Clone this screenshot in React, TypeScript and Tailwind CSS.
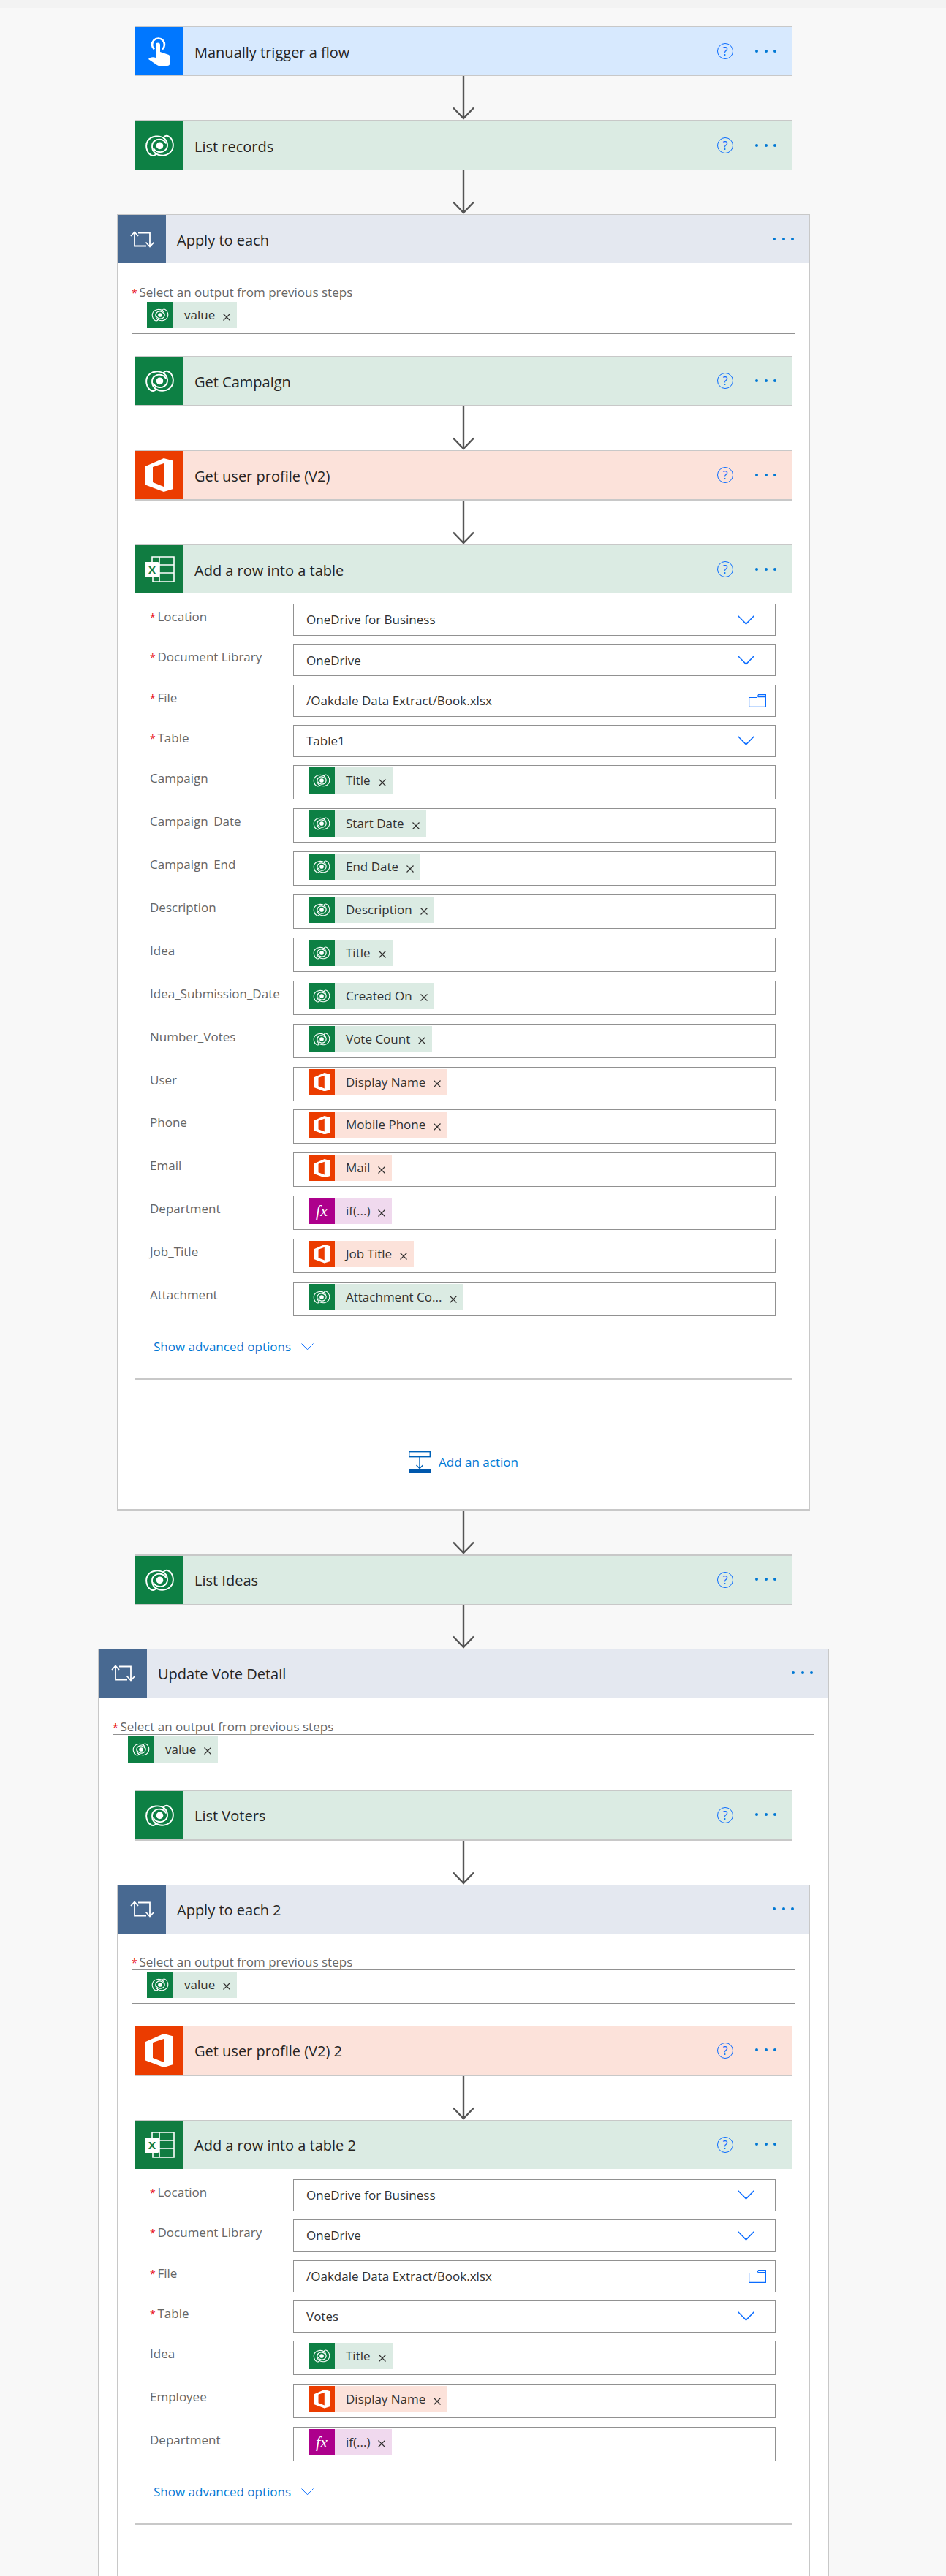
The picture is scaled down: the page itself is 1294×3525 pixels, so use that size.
import React from 'react';

const font = "font-['Open_Sans','Noto_Sans',sans-serif]";

type Kind = 'data' | 'office' | 'fx';

const chipBg: Record<Kind, string> = {
  data: 'bg-[#dbebe3]',
  office: 'bg-[#fce2da]',
  fx: 'bg-[#f0d9ee]',
};
const chipIcon: Record<Kind, string> = {
  data: 'bg-[#0d8044]',
  office: 'bg-[#eb3c00]',
  fx: 'bg-[#ad008c]',
};

const DataverseIcon = ({ size }: { size: number }) => (
  <svg width={size} height={size * 0.75} viewBox="-1 -1 42 32" fill="none" stroke="white" strokeWidth="2">
    <path d="M27 5C20-.5 8 .5 3 8C-1 14 1 24 7 28C10 30 13 29 15 27" />
    <path d="M13 25C20 31 32 30 37 22C41 16 39 5 33 2C30 0 27 1 25 3.5" />
    <path d="M15 27C8 22 7 12 13 8C18 4 27 6 29 12" />
    <path d="M25 3.5C32 8 33 18 27 22C22 26 13 24 11 18" />
    <circle cx="20" cy="15" r="5" fill="white" stroke="none" />
  </svg>
);

const OfficeIcon = ({ width }: { width: number }) => (
  <svg width={width} height={(width * 46) / 38} viewBox="0 0 38 46" fill="white">
    <path fillRule="evenodd" d="M0 11L25 0L38 3.5V42L25 46L0 36.5ZM25 7L10 12V33L25 39Z" />
  </svg>
);

const ExcelIcon = () => (
  <svg width="41" height="36" viewBox="0 0 41 36" fill="none" stroke="white" strokeWidth="1.6">
    <path d="M10 8V1H40V35H11V29M20 1V35M20 12H40M20 23H40" />
    <rect x="0" y="8" width="19" height="21" rx="1" fill="white" stroke="none" />
    <text x="5" y="24" fill="#107c41" stroke="none" fontSize="15" fontWeight="700" fontFamily="'Open Sans', sans-serif">
      X
    </text>
  </svg>
);

const HandIcon = () => (
  <svg width="30" height="40" viewBox="0 0 30 40" fill="white">
    <path d="M8 17.5a8.5 8.5 0 1 1 11 0" fill="none" stroke="white" strokeWidth="2.6" />
    <path d="M10 11.5a3 3 0 0 1 6 0V21l10.5 3.5c2 .7 3 1.8 3 3.5v8.5c0 2-1.5 3.5-3.5 3.5H15c-1.5 0-3-.6-4-1.5L0 31c1.5-2.5 6-3.5 10-2z" />
  </svg>
);

const RepeatIcon = () => (
  <svg width="33" height="23" viewBox="0 0 33 23" fill="none" stroke="white" strokeWidth="1.8">
    <path d="M6 2.5V20.5H22M1 7L6 1.5L11 7M11 2.5H27V20.5M21.5 15.5L27 21.5L32.5 15.5" />
  </svg>
);

const Chevron = ({ width = 23, stroke = 1.5 }: { width?: number; stroke?: number }) => (
  <svg width={width} height={(width * 13) / 23} viewBox="0 0 23 13" fill="none" stroke="#0a6cff" strokeWidth={(stroke * 23) / width}>
    <path d="M.7.7L11.5 11.8L22.3.7" />
  </svg>
);

const FolderIcon = () => (
  <svg width="24" height="18" viewBox="0 0 24 18" fill="none" stroke="#0a6cff" strokeWidth="1.2">
    <path d="M.6 4.5H11.5L13.5.6H23.4V17.4H.6ZM13 3.6H23.4" />
  </svg>
);

const Arrow = () => (
  <div className="flex h-[60px] justify-center">
    <svg width="30" height="60" viewBox="0 0 30 60" fill="none" stroke="#555555" strokeWidth="2.4">
      <path d="M15 0V58M1 43.5L15 58L29 43.5" />
    </svg>
  </div>
);

const Dots = () => (
  <div className="flex gap-[8.5px]">
    <span className="h-[4px] w-[4px] rounded-full bg-[#0078d4]" />
    <span className="h-[4px] w-[4px] rounded-full bg-[#0078d4]" />
    <span className="h-[4px] w-[4px] rounded-full bg-[#0078d4]" />
  </div>
);

const Help = () => (
  <span className="flex h-[22px] w-[22px] items-center justify-center rounded-full border border-[#0a6cff] text-[16px] leading-none text-[#0a6cff]">
    ?
  </span>
);

const Header = ({
  title,
  icon,
  iconBg,
  headBg,
  help = true,
}: {
  title: string;
  icon: React.ReactNode;
  iconBg: string;
  headBg: string;
  help?: boolean;
}) => (
  <div className={`flex h-[66px] items-center ${headBg}`}>
    <div className={`flex h-[66px] w-[66px] shrink-0 items-center justify-center ${iconBg}`}>{icon}</div>
    <div className="ml-[15px] flex-1 pt-[3px] text-[20px] leading-[26px] text-[#252423]">{title}</div>
    {help && <Help />}
    {help && <div className="w-[30px]" />}
    <div className="mr-[21px] mb-[1px]">
      <Dots />
    </div>
  </div>
);

const Step = ({
  title,
  kind,
  heavyTop = false,
}: {
  title: string;
  kind: 'trigger' | 'data' | 'office';
  heavyTop?: boolean;
}) => (
  <div
    className={`w-[900px] border-x border-[#c8c8c8] ${heavyTop ? 'border-t-2 border-b' : 'border-t border-b-2'}`}
  >
    {kind === 'trigger' && <Header title={title} icon={<HandIcon />} iconBg="bg-[#0077ff]" headBg="bg-[#d7e9fe]" />}
    {kind === 'data' && <Header title={title} icon={<DataverseIcon size={41} />} iconBg="bg-[#0d8044]" headBg="bg-[#dbebe3]" />}
    {kind === 'office' && <Header title={title} icon={<OfficeIcon width={38} />} iconBg="bg-[#eb3c00]" headBg="bg-[#fce2da]" />}
  </div>
);

const Chip = ({ kind, text }: { kind: Kind; text: string }) => (
  <div className={`flex h-[36px] items-center ${chipBg[kind]}`}>
    <div className={`flex h-[36px] w-[36px] items-center justify-center ${chipIcon[kind]}`}>
      {kind === 'data' && <DataverseIcon size={24} />}
      {kind === 'office' && <OfficeIcon width={21} />}
      {kind === 'fx' && <span className="font-['Liberation_Serif',serif] text-[22px] leading-none text-white italic">fx</span>}
    </div>
    <span className="ml-[15px] text-[17px] leading-[20px] text-[#323130]">{text}</span>
    <svg className="mt-[5px] mr-[9px] ml-[11px]" width="10" height="10" viewBox="0 0 10 10" stroke="#323130" strokeWidth="1.2">
      <path d="M.5.5L9.5 9.5M9.5.5L.5 9.5" />
    </svg>
  </div>
);

const Required = () => <span className="inline-block w-[10.5px] text-[14px] text-[#e81123]">*</span>;

type Row =
  | { label: string; value: string; end: 'chevron' | 'folder' }
  | { label: string; chip: string; kind: Kind };

const SelectRow = ({ row }: { row: Extract<Row, { value: string }> }) => (
  <div className="flex h-[55.33px] items-start">
    <div className="w-[196px] pt-[7px] text-[17px] leading-[22px] text-[#666666]">
      <Required />
      {row.label}
    </div>
    <div className="flex h-[44px] flex-1 items-center border border-[#919191] bg-white pr-[12px] pl-[17px]">
      <span className="flex-1 text-[17px] text-[#323130]">{row.value}</span>
      {row.end === 'chevron' ? (
        <span className="mr-[16px]">
          <Chevron />
        </span>
      ) : (
        <FolderIcon />
      )}
    </div>
  </div>
);

const TokenRow = ({ row }: { row: Extract<Row, { chip: string }> }) => (
  <div className="flex h-[58.9px] items-start">
    <div className="w-[196px] pt-[7px] text-[17px] leading-[22px] text-[#666666]">{row.label}</div>
    <div className="flex h-[47px] flex-1 border border-[#919191] bg-white pt-[2px] pl-[20px]">
      <Chip kind={row.kind} text={row.chip} />
    </div>
  </div>
);

const AddRow = ({ title, rows }: { title: string; rows: Row[] }) => (
  <div className="w-[900px] border-x border-t border-b-2 border-[#c8c8c8] bg-white">
    <Header title={title} icon={<ExcelIcon />} iconBg="bg-[#107c41]" headBg="bg-[#dbebe3]" />
    <div className="pt-[14px] pr-[22px] pl-[20px]">
      {rows.map(row =>
        'chip' in row ? <TokenRow key={row.label} row={row} /> : <SelectRow key={row.label} row={row} />,
      )}
    </div>
    <div className="flex h-[73px] items-center gap-[14px] pb-[13px] pl-[25px] text-[17px] text-[#0078d4]">
      Show advanced options
      <Chevron width={17} stroke={1} />
    </div>
  </div>
);

const Loop = ({
  title,
  width,
  pt,
  children,
  after,
}: {
  title: string;
  width: string;
  pt: string;
  children: React.ReactNode;
  after?: React.ReactNode;
}) => (
  <div className={`${width} border border-b-2 border-[#c8c8c8] bg-white`}>
    <Header title={title} icon={<RepeatIcon />} iconBg="bg-[#486991]" headBg="bg-[#e4e8f0]" help={false} />
    <div className={`px-[19px] ${pt}`}>
      <div className="h-[20px] text-[17px] leading-[20px] text-[#666666]">
        <Required />
        Select an output from previous steps
      </div>
      <div className="flex h-[47px] border border-[#919191] pt-[2px] pl-[20px]">
        <Chip kind="data" text="value" />
      </div>
    </div>
    <div className="flex flex-col items-center pt-[30px]">{children}</div>
    {after}
  </div>
);

const mainRows: Row[] = [
  { label: 'Location', value: 'OneDrive for Business', end: 'chevron' },
  { label: 'Document Library', value: 'OneDrive', end: 'chevron' },
  { label: 'File', value: '/Oakdale Data Extract/Book.xlsx', end: 'folder' },
  { label: 'Table', value: 'Table1', end: 'chevron' },
  { label: 'Campaign', chip: 'Title', kind: 'data' },
  { label: 'Campaign_Date', chip: 'Start Date', kind: 'data' },
  { label: 'Campaign_End', chip: 'End Date', kind: 'data' },
  { label: 'Description', chip: 'Description', kind: 'data' },
  { label: 'Idea', chip: 'Title', kind: 'data' },
  { label: 'Idea_Submission_Date', chip: 'Created On', kind: 'data' },
  { label: 'Number_Votes', chip: 'Vote Count', kind: 'data' },
  { label: 'User', chip: 'Display Name', kind: 'office' },
  { label: 'Phone', chip: 'Mobile Phone', kind: 'office' },
  { label: 'Email', chip: 'Mail', kind: 'office' },
  { label: 'Department', chip: 'if(...)', kind: 'fx' },
  { label: 'Job_Title', chip: 'Job Title', kind: 'office' },
  { label: 'Attachment', chip: 'Attachment Co...', kind: 'data' },
];

const voteRows: Row[] = [
  { label: 'Location', value: 'OneDrive for Business', end: 'chevron' },
  { label: 'Document Library', value: 'OneDrive', end: 'chevron' },
  { label: 'File', value: '/Oakdale Data Extract/Book.xlsx', end: 'folder' },
  { label: 'Table', value: 'Votes', end: 'chevron' },
  { label: 'Idea', chip: 'Title', kind: 'data' },
  { label: 'Employee', chip: 'Display Name', kind: 'office' },
  { label: 'Department', chip: 'if(...)', kind: 'fx' },
];

const AddAction = () => (
  <div className="flex items-center justify-center gap-[11px] pt-[98px] pb-[49px] text-[17px] text-[#0078d4]">
    <svg width="30" height="30" viewBox="0 0 30 30" fill="none" stroke="#0062b8" strokeWidth="1.4">
      <rect x=".7" y=".7" width="28.6" height="7" />
      <path d="M15 8V23M10.5 19L15 23.5L19.5 19" />
      <rect x="0" y="24" width="30" height="6" fill="#0058ad" stroke="none" />
    </svg>
    Add an action
  </div>
);

export default function App() {
  return (
    <div className={`h-[3525px] overflow-hidden bg-[#f8f8f8] ${font}`}>
      <div className="h-[11px] bg-[#f3f3f3]" />
      <div className="flex w-[1268px] flex-col items-center pt-[24px]">
        <Step title="Manually trigger a flow" kind="trigger" heavyTop />
        <Arrow />
        <Step title="List records" kind="data" heavyTop />
        <Arrow />
        <Loop title="Apply to each" width="w-[948px]" pt="pt-[30px]" after={<AddAction />}>
          <Step title="Get Campaign" kind="data" />
          <Arrow />
          <Step title="Get user profile (V2)" kind="office" />
          <Arrow />
          <AddRow title="Add a row into a table" rows={mainRows} />
        </Loop>
        <Arrow />
        <Step title="List Ideas" kind="data" heavyTop />
        <Arrow />
        <Loop title="Update Vote Detail" width="w-[1000px]" pt="pt-[30px]">
          <Step title="List Voters" kind="data" />
          <Arrow />
          <Loop title="Apply to each 2" width="w-[948px]" pt="pt-[29px]" after={<div className="h-[200px]" />}>
            <Step title="Get user profile (V2) 2" kind="office" />
            <Arrow />
            <AddRow title="Add a row into a table 2" rows={voteRows} />
          </Loop>
        </Loop>
      </div>
    </div>
  );
}
